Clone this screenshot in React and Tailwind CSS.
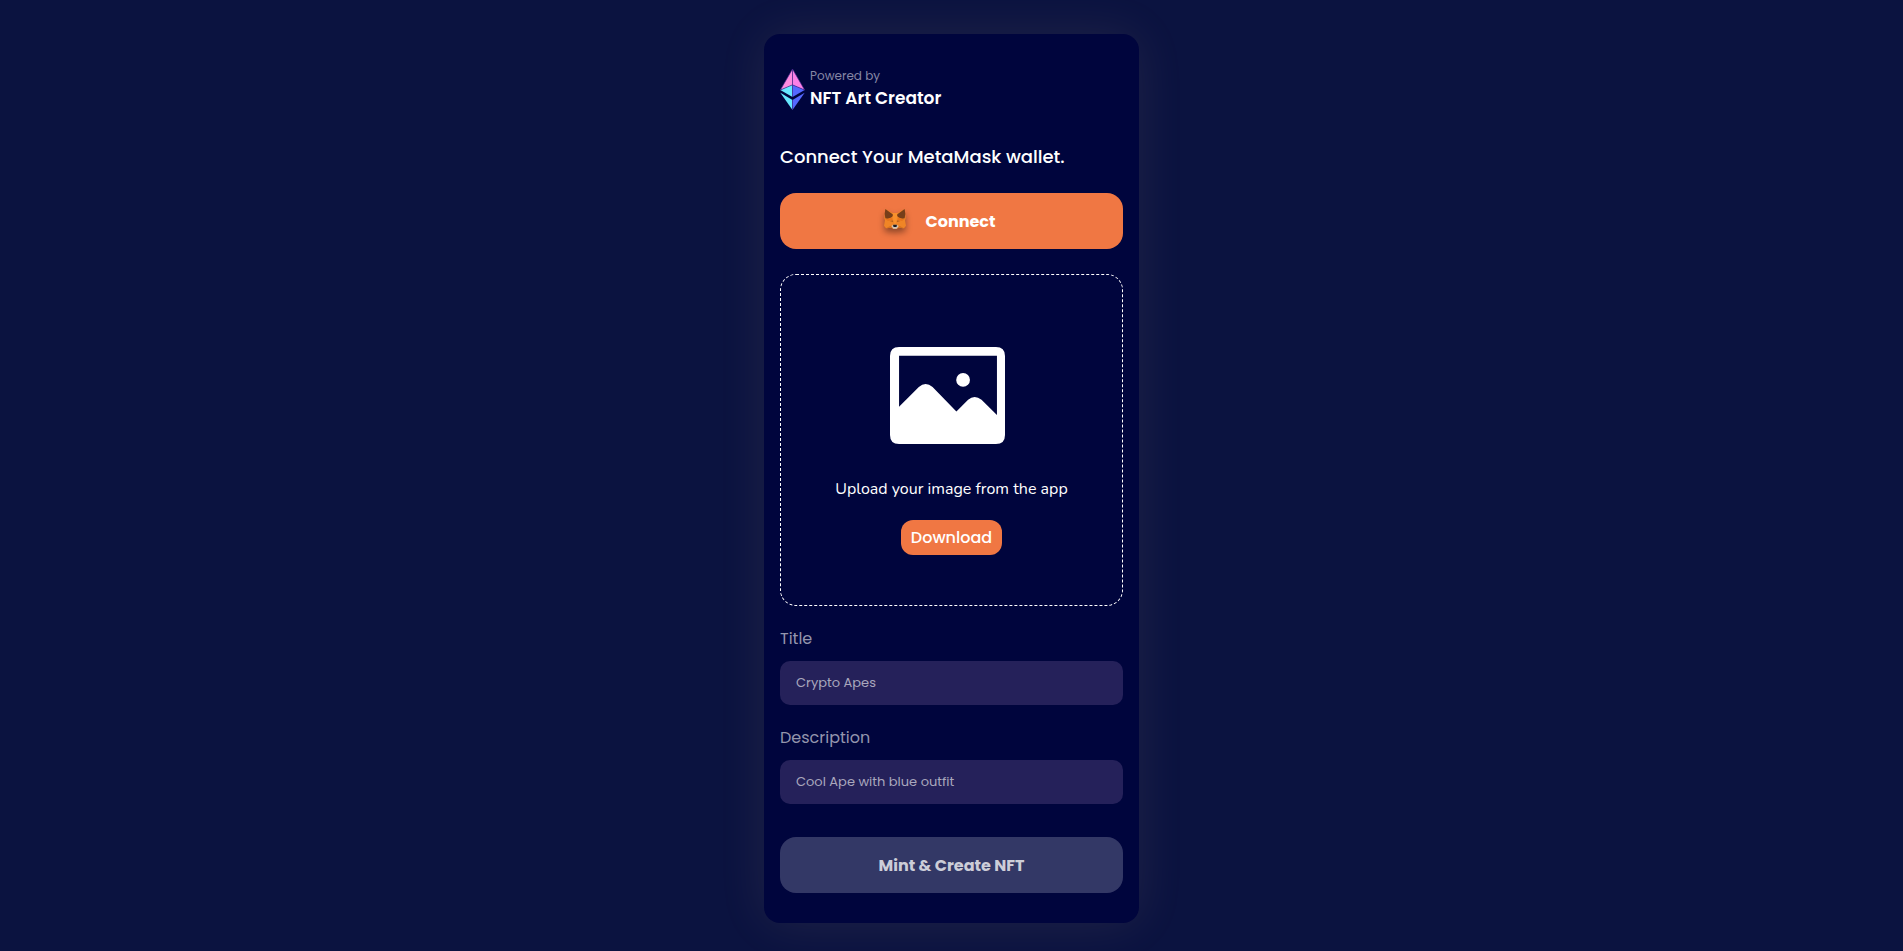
function EthLogo() {
  return (
    <svg viewBox="0 0 75 123" className="h-[41px] w-[25px] shrink-0" aria-hidden="true">
      <polygon points="37.5,0 1,63 37.5,48" fill="#ff8be0" />
      <polygon points="37.5,0 74,63 37.5,48" fill="#fb80e6" />
      <polygon points="1,63 37.5,47 37.5,84" fill="#66e8ff" />
      <polygon points="74,63 37.5,47 37.5,84" fill="#5468ff" />
      <polygon points="1,71 37.5,93 37.5,123" fill="#66e8ff" />
      <polygon points="74,71 37.5,93 37.5,123" fill="#5468ff" />
      <path
        d="M37.5 0 1 63l36.500-15.500L74 63zM37.500 0V84M37.500 93V123"
        fill="none"
        stroke="#43268a"
        strokeWidth="2"
        strokeLinejoin="round"
      />
    </svg>
  );
}

function Fox() {
  return (
    <svg
      viewBox="0 0 66 60"
      preserveAspectRatio="none"
      className="-mt-1.5 h-5 w-[22px] drop-shadow-[0_4px_3px_rgba(0,0,0,0.4)]"
      aria-hidden="true"
    >
      <polygon points="4,0 26,12 40,12 62,0 65,28 63,34 66,50 60,58 44,56 38,60 28,60 22,56 6,58 0,50 3,34 1,28" fill="#f08526" />
      <polygon points="4,0 28,17 24,24 12,30 4,28 2,14" fill="#763e1a" />
      <polygon points="62,0 38,17 42,24 54,30 62,28 64,14" fill="#763e1a" />
      <polygon points="26,12 40,12 37,44 29,44" fill="#f8902c" />
      <polygon points="4,30 24,26 26,32 12,36" fill="#e8751c" />
      <polygon points="62,30 42,26 40,32 54,36" fill="#e8751c" />
      <polygon points="17,36 26,34 28,40" fill="#b8601e" />
      <polygon points="49,36 40,34 38,40" fill="#b8601e" />
      <polygon points="6,58 20,50 26,56 22,56" fill="#d5711f" />
      <polygon points="60,58 46,50 40,56 44,56" fill="#d5711f" />
      <polygon points="22,51 29,47 37,47 44,51 38,59 28,59" fill="#cfc3b8" />
      <polygon points="28,47 38,47 39,52 36,54 30,54 27,52" fill="#1c1c22" />
    </svg>
  );
}

function PictureIcon() {
  return (
    <svg viewBox="0 0 343 289" className="h-[97px] w-[115px] text-white" aria-hidden="true">
      <path
        fillRule="evenodd"
        fill="currentColor"
        d="M27 0H316Q343 0 343 27V262Q343 289 316 289H27Q0 289 0 262V27Q0 0 27 0ZM27 26V178L86 119Q106 101 127 119L198 192L233 157Q252 141 273 157L319 203V26Z"
      />
      <circle cx="218" cy="98" r="20.500" fill="currentColor" />
    </svg>
  );
}

function Field({ id, label, placeholder }) {
  return (
    <div className="flex flex-col gap-2">
      <label htmlFor={id} className="text-base leading-7 text-[#9495ad]">
        {label}
      </label>
      <input
        id={id}
        type="text"
        placeholder={placeholder}
        className="h-11 w-full rounded-[10px] bg-[#25215a] px-4 text-[13px] text-white outline-none placeholder:text-[#a9a7bd]"
      />
    </div>
  );
}

export default function App() {
  return (
    <div className="flex min-h-screen items-start justify-center bg-[#0b1340] pt-[34px] pb-7 font-['Poppins','Inter',sans-serif] text-white">
      <main className="w-full max-w-[375px] rounded-2xl bg-[#00053d] px-4 pt-8 pb-[30px] shadow-[0_0_50px_rgba(255,200,150,0.09)]">
        <header className="flex items-center gap-[5px]">
          <EthLogo />
          <div className="pt-0.5">
            <p className="text-xs leading-4 text-[#8688a5]">Powered by</p>
            <h1 className="text-[17px] leading-7 font-semibold">NFT Art Creator</h1>
          </div>
        </header>

        <h2 className="mt-[31px] text-lg leading-7 font-medium">Connect Your MetaMask wallet.</h2>

        <button
          type="button"
          className="mt-[22px] flex h-14 w-full items-center justify-center gap-5 rounded-2xl bg-[#f07743] pt-0.5 pr-6 text-base font-bold"
        >
          <Fox />
          Connect
        </button>

        <section className="mt-[25px] flex h-[332px] flex-col items-center rounded-2xl border border-dashed border-white pt-[72px]">
          <div className="pr-2">
            <PictureIcon />
          </div>
          <p className="mt-[33px] font-['Nunito','Open_Sans',sans-serif] text-base leading-6">
            Upload your image from the app
          </p>
          <button
            type="button"
            className="mt-[19px] h-[35px] rounded-xl bg-[#f07743] px-[10px] text-base font-medium"
          >
            Download
          </button>
        </section>

        <form className="mt-[19px]">
          <div className="flex flex-col gap-[19px]">
            <Field id="title" label="Title" placeholder="Crypto Apes" />
            <Field id="description" label="Description" placeholder="Cool Ape with blue outfit" />
          </div>
          <button
            type="button"
            className="mt-[33px] h-14 w-full rounded-2xl bg-[#333866] pt-0.5 text-base font-bold text-[#cccdd8]"
          >
            Mint &amp; Create NFT
          </button>
        </form>
      </main>
    </div>
  );
}
